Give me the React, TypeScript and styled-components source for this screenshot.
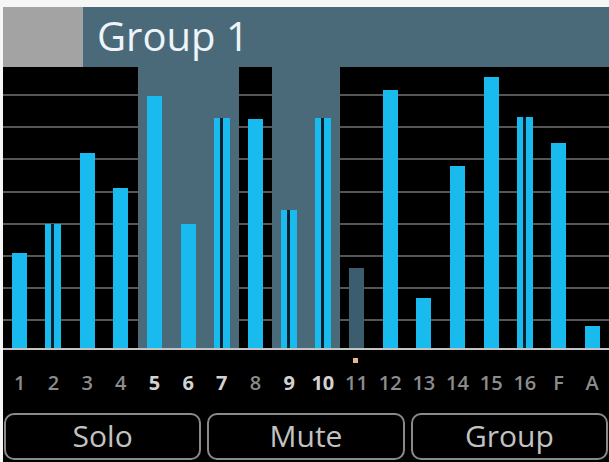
import React from "react";
import styled, { createGlobalStyle, css } from "styled-components";

const GlobalStyle = createGlobalStyle`
  html, body {
    margin: 0;
    padding: 0;
    background: #f6f6f6;
  }
  body {
    font-family: "Open Sans", "Noto Sans", sans-serif;
  }
`;

const TEAL = "#4a6a7a";
const CYAN = "#19bbee";

type Channel = {
  label: string;
  level: number; // bar height in px
  split?: boolean;
  selected?: boolean;
  muted?: boolean;
  marker?: boolean;
};

const channels: Channel[] = [
  { label: "1", level: 95 },
  { label: "2", level: 124, split: true },
  { label: "3", level: 195 },
  { label: "4", level: 160 },
  { label: "5", level: 252, selected: true },
  { label: "6", level: 124, selected: true },
  { label: "7", level: 230, split: true, selected: true },
  { label: "8", level: 229 },
  { label: "9", level: 138, split: true, selected: true },
  { label: "10", level: 230, split: true, selected: true },
  { label: "11", level: 80, muted: true, marker: true },
  { label: "12", level: 258 },
  { label: "13", level: 50 },
  { label: "14", level: 182 },
  { label: "15", level: 271 },
  { label: "16", level: 231, split: true },
  { label: "F", level: 205 },
  { label: "A", level: 22 },
];

const Screen = styled.div`
  margin: 7px 0 0 3px;
  width: 606px;
  height: 455px;
  background: #000;
  display: flex;
  flex-direction: column;
  overflow: hidden;
`;

const Header = styled.header`
  height: 60px;
  display: flex;
  flex-shrink: 0;
`;

const GroupSwatch = styled.div`
  width: 80px;
  background: #a3a3a3;
`;

const TitleBar = styled.div`
  flex: 1;
  background: ${TEAL};
  display: flex;
  align-items: center;
  padding-left: 14px;
  color: #eef4f7;
  font-size: 40px;
  line-height: 1;
  padding-bottom: 2px;
`;

const Chart = styled.div`
  height: 281px;
  display: grid;
  grid-template-columns: repeat(18, 1fr);
  flex-shrink: 0;
`;

const gridLines = css`
  background-color: #000;
  background-image: repeating-linear-gradient(
    to top,
    transparent 0px,
    transparent 27px,
    #565656 27px,
    #565656 29px,
    transparent 29px,
    transparent 32.1px
  );
`;

const Column = styled.div<{ $selected?: boolean }>`
  display: flex;
  align-items: flex-end;
  justify-content: center;
  ${(p) => (p.$selected ? `background: ${TEAL};` : gridLines)}
`;

const Bar = styled.div<{ $split?: boolean; $muted?: boolean }>`
  width: ${(p) => (p.$split ? 16 : 15)}px;
  background: ${(p) =>
    p.$muted
      ? "#3c5d6d"
      : p.$split
      ? `linear-gradient(to right, ${CYAN} 0 6px, #06202c 6px 9px, ${CYAN} 9px 16px)`
      : CYAN};
`;

const Baseline = styled.div`
  height: 2px;
  background: #c4c4c4;
  flex-shrink: 0;
`;

const Labels = styled.div`
  height: 62px;
  display: grid;
  grid-template-columns: repeat(18, 1fr);
  flex-shrink: 0;
`;

const LabelCell = styled.div<{ $selected?: boolean }>`
  position: relative;
  display: flex;
  align-items: center;
  justify-content: center;
  padding-top: 2px;
  font-size: 20px;
  font-weight: ${(p) => (p.$selected ? 700 : 600)};
  color: ${(p) => (p.$selected ? "#d2d2d2" : "#8c8c8c")};
`;

const Marker = styled.span`
  position: absolute;
  top: 8px;
  left: 50%;
  width: 5px;
  height: 5px;
  margin-left: -3px;
  background: #e6b98c;
`;

const ButtonRow = styled.div`
  display: flex;
  gap: 6px;
  padding: 1px 1px 0 1px;
  height: 47px;
  flex-shrink: 0;
`;

const SoftKey = styled.button`
  flex: 1;
  background: #000;
  border: 2px solid #8a8a8a;
  border-radius: 10px;
  color: #c2c2c2;
  font-family: "Open Sans", "Noto Sans", sans-serif;
  font-size: 30px;
  line-height: 1;
  padding: 0 0 1px;
  display: flex;
  align-items: center;
  justify-content: center;
`;

export default function App() {
  return (
    <>
      <GlobalStyle />
      <Screen>
        <Header>
          <GroupSwatch />
          <TitleBar>Group 1</TitleBar>
        </Header>
        <Chart>
          {channels.map((c) => (
            <Column key={c.label} $selected={c.selected}>
              <Bar
                $split={c.split}
                $muted={c.muted}
                style={{ height: c.level }}
              />
            </Column>
          ))}
        </Chart>
        <Baseline />
        <Labels>
          {channels.map((c) => (
            <LabelCell key={c.label} $selected={c.selected}>
              {c.marker && <Marker />}
              {c.label}
            </LabelCell>
          ))}
        </Labels>
        <ButtonRow>
          <SoftKey>Solo</SoftKey>
          <SoftKey>Mute</SoftKey>
          <SoftKey>Group</SoftKey>
        </ButtonRow>
      </Screen>
    </>
  );
}
